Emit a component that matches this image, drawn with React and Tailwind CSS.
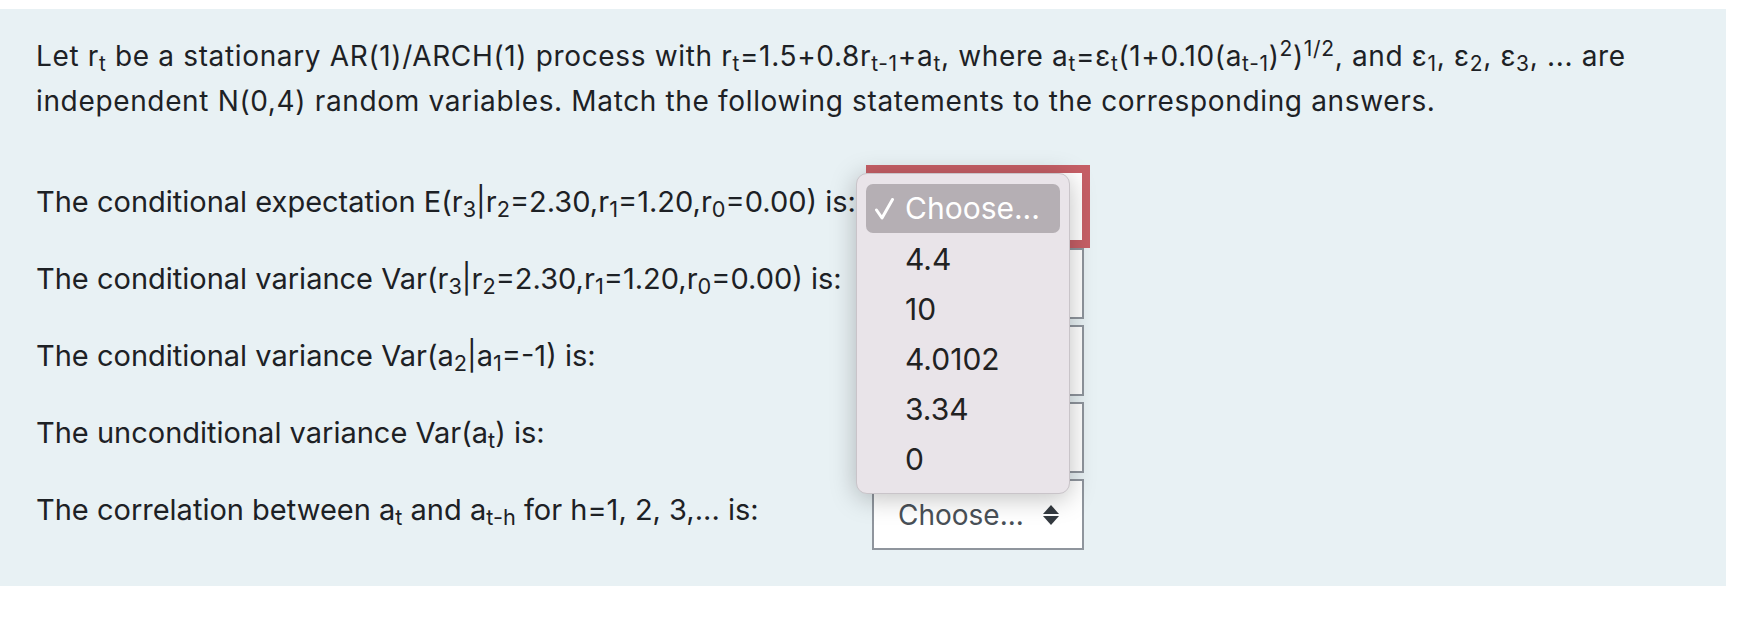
import React from 'react';

const statements = [
  <>The conditional expectation E(r<sub>3</sub>|r<sub>2</sub>=2.30,r<sub>1</sub>=1.20,r<sub>0</sub>=0.00) is:</>,
  <>The conditional variance Var(r<sub>3</sub>|r<sub>2</sub>=2.30,r<sub>1</sub>=1.20,r<sub>0</sub>=0.00) is:</>,
  <>The conditional variance Var(a<sub>2</sub>|a<sub>1</sub>=-1) is:</>,
  <>The unconditional variance Var(a<sub>t</sub>) is:</>,
  <>The correlation between a<sub>t</sub> and a<sub>t-h</sub> for h=1, 2, 3,... is:</>,
];

const options = ['4.4', '10', '4.0102', '3.34', '0'];

function SelectArrows() {
  return (
    <svg width="16" height="20" viewBox="0 0 16 20" className="shrink-0">
      <path d="M8 0 L16 9 L0 9 Z" fill="#343a40" />
      <path d="M0 11 L16 11 L8 20 Z" fill="#343a40" />
    </svg>
  );
}

function FakeSelect({ invalid }) {
  return (
    <div
      className={
        'w-[212px] h-[71px] bg-white flex items-center justify-between pl-[24px] pr-[23px] ' +
        (invalid
          ? 'border-2 border-[#c65f66] shadow-[0_0_0_6px_#c65f66]'
          : 'border-2 border-[#8f959d]')
      }
    >
      <span className="text-[28px] text-[#495057]">Choose...</span>
      <SelectArrows />
    </div>
  );
}

function Popup() {
  return (
    <div className="absolute left-[-16px] top-[2px] w-[214px] h-[321px] rounded-[11px] bg-[#e9e4e9] border border-[#c9c4c9] shadow-[0_4px_26px_rgba(0,0,0,0.25)] pt-[10px] px-[9px] z-10">
      <div className="h-[49px] mb-[1px] rounded-[7px] bg-[#b5afb4] flex items-center pl-[9px]">
        <svg width="19" height="22" viewBox="0 0 19 22" className="shrink-0">
          <path d="M1.5 12 L7 20 L17.5 1.5" fill="none" stroke="#ffffff" strokeWidth="3" strokeLinecap="round" strokeLinejoin="round" />
        </svg>
        <span className="ml-[11px] text-[30px] text-white">Choose...</span>
      </div>
      {options.map((o) => (
        <div key={o} className="h-[50px] flex items-center pl-[39px] text-[30px] text-[#222222]">
          {o}
        </div>
      ))}
    </div>
  );
}

export default function App() {
  return (
    <div className="w-[1754px] h-[626px] bg-white pt-[9px]" style={{ fontFamily: 'Inter, "Liberation Sans", sans-serif' }}>
      <div className="w-[1726px] h-[577px] bg-[#e8f1f4] pl-[36px] pr-[30px] pt-[25px] text-[#1d2125]">
        <p className="text-[28px] leading-[45px] tracking-[0.65px]">
          Let r<sub>t</sub> be a stationary AR(1)/ARCH(1) process with r<sub>t</sub>=1.5+0.8r<sub>t-1</sub>+a<sub>t</sub>, where a<sub>t</sub>=ε<sub>t</sub>(1+0.10(a<sub>t-1</sub>)<sup>2</sup>)<sup>1/2</sup>, and ε<sub>1</sub>, ε<sub>2</sub>, ε<sub>3</sub>, ... are independent N(0,4) random variables. Match the following statements to the corresponding answers.
        </p>
        <div className="mt-[47px] flex">
          <div className="w-[836px] flex flex-col gap-[6px]">
            {statements.map((s, i) => (
              <div key={i} className="h-[71px] flex items-center pb-[10px] text-[29px] leading-[45px]">
                <span>{s}</span>
              </div>
            ))}
          </div>
          <div className="relative flex flex-col gap-[6px]">
            {statements.map((_, i) => (
              <FakeSelect key={i} invalid={i === 0} />
            ))}
            <Popup />
          </div>
        </div>
      </div>
    </div>
  );
}
